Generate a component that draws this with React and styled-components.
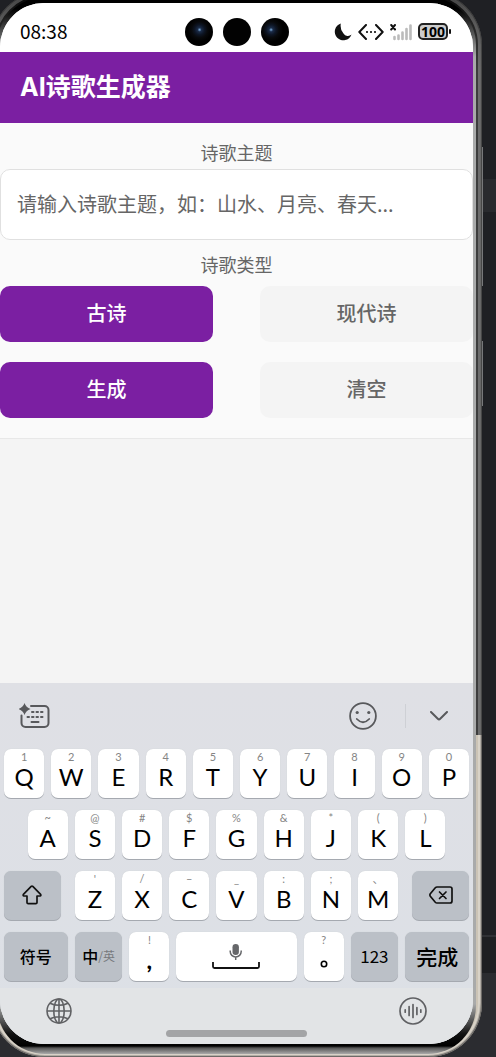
import React, { useState } from 'react';
import styled, { createGlobalStyle } from 'styled-components';

const ROW_ONE = [
    ['Q', '1'], ['W', '2'], ['E', '3'], ['R', '4'], ['T', '5'],
    ['Y', '6'], ['U', '7'], ['I', '8'], ['O', '9'], ['P', '0'],
];
const ROW_TWO = [
    ['A', '~'], ['S', '@'], ['D', '#'], ['F', '$'], ['G', '%'],
    ['H', '&'], ['J', '*'], ['K', '('], ['L', ')'],
];
const ROW_THREE = [
    ['Z', "'"], ['X', '/'], ['C', '–'], ['V', '_'], ['B', ':'], ['N', ';'], ['M', '、'],
];

function LetterKey({ letter, hint, start, onPress }) {
    return (
        <Key type="button" $start={start} onClick={() => onPress(letter)}>
            <Hint>{hint}</Hint>
            <Letter>{letter}</Letter>
        </Key>
    );
}

function StatusBar() {
    return (
        <Status>
            <Time>08:38</Time>
            <Cameras>
                <Lens $glint="52%" />
                <Lens />
                <Lens $glint="36%" />
            </Cameras>
            <StatusIcons>
                <svg width="18" height="18" viewBox="0 0 18 18">
                    <path d="M6.800 .5A8.600 8.600 0 1 0 17.500 11.600A5.200 5.200 0 0 1 9.500 10.500Q5.800 6.500 6.800 .5Z" fill="#111" />
                </svg>
                <svg width="26" height="16" viewBox="0 0 26 16" fill="none" stroke="#111" strokeWidth="2" strokeLinecap="round" strokeLinejoin="round">
                    <path d="M8 1L1.300 8L8 15M18 1L24.700 8L18 15" />
                    <path d="M9 8h.01M13 8h.01M17 8h.01" strokeWidth="2.200" />
                </svg>
                <svg width="22" height="18" viewBox="0 0 22 18" strokeLinecap="round">
                    <path d="M1.200 2L5 6.500M5 2L1.200 6.500" stroke="#111" strokeWidth="2" />
                    <path d="M4.500 14v2M8.500 12.500v3.500M12.500 9.500v6.500M16.500 6v10M20.500 2.500v13.500" stroke="#bbb" strokeWidth="2.600" />
                </svg>
                <Battery>100</Battery>
            </StatusIcons>
        </Status>
    );
}

function Keyboard({ onPress }) {
    return (
        <KeyboardArea>
            <Toolbar>
                <IconButton type="button" aria-label="AI">
                    <svg width="31" height="26" viewBox="0 0 31 26" fill="none" stroke="#58595c" strokeLinecap="round">
                        <path d="M12 3H25.500a4 4 0 0 1 4 4V20a4 4 0 0 1-4 4H6.500a4 4 0 0 1-4-4V12.500" strokeWidth="2" />
                        <path d="M5.500 0Q7 4.500 11.500 6Q7 7.500 5.500 12Q4 7.500 -.5 6Q4 4.500 5.500 0Z" fill="#58595c" stroke="none" />
                        <path d="M13 9h1.500M17.500 9h1.500M22 9h1.500M8.500 14h1.500M13 14h1.500M17.500 14h1.500M22 14h1.500M12.500 19h7" strokeWidth="2" />
                    </svg>
                </IconButton>
                <Tools>
                    <IconButton type="button" aria-label="表情">
                        <svg width="28" height="28" viewBox="0 0 28 28" fill="none" stroke="#58595c" strokeWidth="1.800" strokeLinecap="round">
                            <circle cx="14" cy="14" r="12.900" />
                            <path d="M7.800 17Q14 23.500 20.200 17" />
                            <circle cx="8.200" cy="10.500" r="1.600" fill="#58595c" stroke="none" />
                            <circle cx="19.800" cy="10.500" r="1.600" fill="#58595c" stroke="none" />
                        </svg>
                    </IconButton>
                    <Divider />
                    <IconButton type="button" aria-label="收起">
                        <svg width="18" height="10" viewBox="0 0 18 10" fill="none" stroke="#58595c" strokeWidth="2" strokeLinecap="round" strokeLinejoin="round">
                            <path d="M1 1L7.800 7.800Q9 9 10.200 7.800L17 1" />
                        </svg>
                    </IconButton>
                </Tools>
            </Toolbar>
            <Keys>
                <KeyRow>
                    {ROW_ONE.map(([letter, hint]) => (
                        <LetterKey key={letter} letter={letter} hint={hint} onPress={onPress} />
                    ))}
                </KeyRow>
                <KeyRow>
                    {ROW_TWO.map(([letter, hint], i) => (
                        <LetterKey key={letter} letter={letter} hint={hint} start={i === 0 ? 2 : null} onPress={onPress} />
                    ))}
                </KeyRow>
                <KeyRow>
                    <WideKey type="button" $side="right" aria-label="Shift">
                        <svg width="20" height="20" viewBox="0 0 20 20" fill="none" stroke="#111" strokeWidth="1.700" strokeLinejoin="round">
                            <path d="M9.200 1.400Q10 .7 10.800 1.400L18.600 9.400Q19.300 10.700 18 11H15V17.500Q15 18.700 13.800 18.700H6.200Q5 18.700 5 17.500V11H2Q.7 10.700 1.400 9.400Z" />
                        </svg>
                    </WideKey>
                    {ROW_THREE.map(([letter, hint]) => (
                        <LetterKey key={letter} letter={letter} hint={hint} onPress={onPress} />
                    ))}
                    <WideKey type="button" $side="left" aria-label="删除">
                        <svg width="24" height="18" viewBox="0 0 24 18" fill="none" stroke="#111" strokeWidth="1.700" strokeLinecap="round" strokeLinejoin="round">
                            <path d="M8 1H21a2 2 0 0 1 2 2V15a2 2 0 0 1-2 2H8Q7 17 6.300 16.200L1.300 10.200Q.5 9 1.300 7.800L6.300 1.800Q7 1 8 1Z" />
                            <path d="M10.500 6L17 12.500M17 6L10.500 12.500" />
                        </svg>
                    </WideKey>
                </KeyRow>
                <BottomRow>
                    <GreyKey type="button">符号</GreyKey>
                    <GreyKey type="button">中<Small>/英</Small></GreyKey>
                    <Key type="button" onClick={() => onPress('，')}>
                        <Hint>!</Hint>
                        <Letter $bold>,</Letter>
                    </Key>
                    <SpaceKey type="button" aria-label="空格" onClick={() => onPress(' ')}>
                        <svg width="48" height="26" viewBox="0 0 48 26" fill="none">
                            <rect x="20.500" y="0" width="6.400" height="11" rx="3.200" fill="#66676a" />
                            <path d="M18.200 6.500v1a5.500 5.500 0 0 0 11 0v-1M23.700 13v3" stroke="#66676a" strokeWidth="1.500" />
                            <path d="M1 18v4.500q0 1.500 1.500 1.500h43q1.500 0 1.500-1.500V18" stroke="#111" strokeWidth="1.800" />
                        </svg>
                    </SpaceKey>
                    <Key type="button" onClick={() => onPress('。')}>
                        <Hint>?</Hint>
                        <Stop viewBox="0 0 8 8"><circle cx="4" cy="4" r="2.700" /></Stop>
                    </Key>
                    <GreyKey type="button"><Digits>123</Digits></GreyKey>
                    <GreyKey type="button" $large>完成</GreyKey>
                </BottomRow>
            </Keys>
            <NavArea>
                <NavIcons>
                    <IconButton type="button" aria-label="切换输入法">
                        <svg width="26" height="26" viewBox="0 0 26 26" fill="none" stroke="#606164" strokeWidth="1.600">
                            <circle cx="13" cy="13" r="12" />
                            <ellipse cx="13" cy="13" rx="5.200" ry="12" />
                            <path d="M1 13H25M13 1V25M4 5.200Q13 9.400 22 5.200M4 20.800Q13 16.600 22 20.800" />
                        </svg>
                    </IconButton>
                    <IconButton type="button" aria-label="语音">
                        <svg width="28" height="28" viewBox="0 0 28 28" fill="none" stroke="#606164" strokeWidth="1.700" strokeLinecap="round">
                            <circle cx="14" cy="14" r="13" />
                            <path d="M6.200 12.800v2.400M10.100 9.500v9M14 7.500v13M17.900 10.500v7M21.800 12.800v2.400" />
                        </svg>
                    </IconButton>
                </NavIcons>
                <HomeBar />
            </NavArea>
        </KeyboardArea>
    );
}

function App() {
    const [topic, setTopic] = useState('');
    const [type, setType] = useState('古诗');

    return (
        <>
            <GlobalStyle />
            <Desk>
                <Phone>
                    <SideButton $top="156px" $height="139px" />
                    <SideButton $top="350px" $height="65px" />
                    <Bezel>
                        <Screen>
                            <StatusBar />
                            <Header>
                                <Title>AI诗歌生成器</Title>
                            </Header>
                            <Form onSubmit={(e) => e.preventDefault()}>
                                <Label as="label" htmlFor="topic">诗歌主题</Label>
                                <TopicInput
                                    id="topic"
                                    type="text"
                                    value={topic}
                                    onChange={(e) => setTopic(e.target.value)}
                                    placeholder="请输入诗歌主题，如：山水、月亮、春天..."
                                />
                                <Label $spaced id="kind">诗歌类型</Label>
                                <ButtonRow role="group" aria-labelledby="kind">
                                    <Button type="button" $primary={type === '古诗'} onClick={() => setType('古诗')}>古诗</Button>
                                    <Button type="button" $primary={type === '现代诗'} onClick={() => setType('现代诗')}>现代诗</Button>
                                </ButtonRow>
                                <ButtonRow>
                                    <Button type="submit" $primary>生成</Button>
                                    <Button type="button" onClick={() => setTopic('')}>清空</Button>
                                </ButtonRow>
                            </Form>
                            <Result />
                            <Keyboard onPress={(char) => setTopic(topic + char)} />
                        </Screen>
                    </Bezel>
                </Phone>
            </Desk>
        </>
    );
}

const GlobalStyle = createGlobalStyle`
    * {
        box-sizing: border-box;
    }
    body {
        margin: 0;
        font-family: "Noto Sans CJK SC", "Noto Sans", sans-serif;
    }
    button, input {
        font-family: inherit;
    }
`
const Desk = styled.div`
    display: flex;
    min-height: 100vh;
    overflow: hidden;
    background: linear-gradient(
        #1f2024 0 179px, #292a2e 179px 212px, #1f2024 212px 935px,
        #303135 935px 937px, #1e1f22 937px 973px, #2b2c30 973px
    );
`
const Phone = styled.div`
    position: relative;
    flex: 1;
    display: flex;
    margin: -9px 14px 0 -9px;
    padding: 6px 6px 3px;
    border-radius: 54px;
    background: linear-gradient(#000 0, #222 30px, #3d3d3d 80px, #3d3d3d 744px, #cbc3b5 744px);
    box-shadow: inset 0 0 0 1px rgba(40, 40, 40, 0.5), inset 0 0 0 2px rgba(90, 90, 90, 0.3), inset 0 0 0 4px rgba(255, 255, 255, 0.25);
`
const SideButton = styled.div`
    position: absolute;
    right: -1px;
    top: ${props => props.$top};
    height: ${props => props.$height};
    width: 1px;
    background: #77787a;
`
const Bezel = styled.div`
    flex: 1;
    display: flex;
    padding: 6px 3px 10px;
    border-radius: 48px;
    background: linear-gradient(#000 0, #000 12px, #a9aaaa 60px, #a9aaaa calc(100% - 50px), #111 calc(100% - 20px), #000 calc(100% - 8px), #555 calc(100% - 6px), #aaa 100%);
`
const Screen = styled.div`
    flex: 1;
    min-width: 0;
    display: flex;
    flex-direction: column;
    overflow: hidden;
    border-radius: 44px;
    background: #f4f4f4;
`
const Status = styled.div`
    display: grid;
    grid-template-columns: 1fr auto 1fr;
    align-items: center;
    height: 49px;
    padding: 8px 20px 0;
    background: #fff;
`
const Time = styled.span`
    font-size: 19px;
    line-height: 24px;
    padding-bottom: 2px;
    color: #000;
`
const Cameras = styled.div`
    display: flex;
    gap: 10px;
`
const Lens = styled.span`
    width: 28px;
    height: 28px;
    border-radius: 50%;
    background: ${props => props.$glint
        ? `radial-gradient(circle at ${props.$glint} 42%, #7fb0df 0, #1b2c48 2px, #0d1524 5px, #08090b 8px, #000 12px)`
        : '#020202'};
`
const StatusIcons = styled.div`
    display: flex;
    align-items: center;
    justify-content: flex-end;
    gap: 6px;
`
const Battery = styled.span`
    position: relative;
    width: 30px;
    height: 17px;
    margin-right: 5px;
    border: 2px solid #222;
    border-radius: 5px;
    background: #ccc;
    color: #000;
    font-family: "Noto Sans", sans-serif;
    font-size: 14px;
    line-height: 13px;
    font-weight: 700;
    display: flex;
    justify-content: center;

    &::after {
        content: '';
        position: absolute;
        right: -5px;
        top: 4px;
        width: 2px;
        height: 5px;
        border-radius: 1px;
        background: #111;
    }
`
const Header = styled.header`
    display: flex;
    align-items: center;
    height: 71px;
    padding: 0 20px 2px;
    background: #7b1fa2;
`
const Title = styled.h1`
    margin: 0;
    font-family: Inter, "Noto Sans CJK SC", sans-serif;
    font-size: 25px;
    line-height: 36px;
    font-weight: 700;
    color: #fff;
`
const Form = styled.form`
    display: flex;
    flex-direction: column;
    padding: 19px 0 20px;
    background: #fafafa;
    border-bottom: 1px solid #e8e8e8;
`
const Label = styled.span`
    align-self: center;
    margin: ${props => props.$spaced ? '14px 0 12px' : '0 0 7px'};
    font-size: 18px;
    line-height: 20px;
    color: #666;
`
const TopicInput = styled.input`
    width: 100%;
    height: 71px;
    padding: 0 16px 2px;
    border: 1px solid #e0e0e0;
    border-radius: 10px;
    background: #fff;
    font-size: 20px;
    color: #333;
    outline: none;

    &::placeholder {
        color: #666;
        opacity: 1;
    }
`
const ButtonRow = styled.div`
    display: flex;
    justify-content: space-between;

    & + & {
        margin-top: 20px;
    }
`
const Button = styled.button`
    width: 45%;
    height: 56px;
    padding: 0 0 3px;
    border: none;
    border-radius: 10px;
    background: ${props => props.$primary ? '#7b1fa2' : '#f4f4f4'};
    color: ${props => props.$primary ? '#fff' : '#666'};
    font-size: 20px;
    font-weight: 500;
`
const Result = styled.main`
    flex: 1;
`
const KeyboardArea = styled.section`
    display: flex;
    flex-direction: column;
    background: linear-gradient(#dfe0e5, #dce0e6);
`
const Toolbar = styled.div`
    display: flex;
    align-items: center;
    justify-content: space-between;
    height: 66px;
    padding: 0 25px 0 19px;
`
const Tools = styled.div`
    display: flex;
    align-items: center;
    gap: 24px;
`
const IconButton = styled.button`
    display: flex;
    padding: 0;
    border: none;
    background: none;
`
const Divider = styled.span`
    width: 1px;
    height: 24px;
    margin-left: 4px;
    background: #ced0d5;
`
const Keys = styled.div`
    display: flex;
    flex-direction: column;
    gap: 12px;
    padding: 0 4px 7px;
`
const KeyRow = styled.div`
    display: grid;
    grid-template-columns: repeat(20, minmax(0, 1fr));
    gap: 7px;
`
const BottomRow = styled.div`
    display: grid;
    grid-template-columns: 64fr 48fr 40fr 121fr 40fr 48fr 64fr;
    gap: 7px;

    & > button {
        grid-column: auto;
    }
`
const Key = styled.button`
    grid-column: ${props => props.$start ? `${props.$start} / span 2` : 'span 2'};
    display: flex;
    flex-direction: column;
    align-items: center;
    min-width: 0;
    height: 49px;
    padding: 0;
    border: none;
    border-radius: 7px;
    background: #fff;
    box-shadow: 0 1px 0 #a5a9b0, 0 0 1px #c4c7cc;
    color: #000;
`
const Hint = styled.span`
    height: 14px;
    font-family: Lato, "Noto Sans CJK SC", sans-serif;
    font-size: 11px;
    line-height: 15px;
    color: #858585;
`
const Letter = styled.span`
    font-family: Lato, sans-serif;
    font-size: 24px;
    line-height: 28px;
    font-weight: ${props => props.$bold ? 700 : 400};
`
const Stop = styled.svg`
    width: 8px;
    height: 8px;
    margin-top: 14px;
    fill: none;
    stroke: #000;
    stroke-width: 1.6;
`
const GreyKey = styled(Key)`
    flex-direction: row;
    justify-content: center;
    padding-bottom: 2px;
    background: #bbc0c7;
    font-size: ${props => props.$large ? '21px' : '16px'};
    font-weight: 500;
    white-space: nowrap;
`
const WideKey = styled(GreyKey)`
    grid-column: span 3;
    margin-${props => props.$side}: 7px;
`
const SpaceKey = styled(Key)`
    justify-content: center;
`
const Digits = styled.span`
    font-size: 17px;
    font-weight: 400;
`
const Small = styled.span`
    font-size: 12px;
    font-weight: 400;
    color: #77797d;
`
const NavArea = styled.div`
    display: flex;
    flex-direction: column;
    align-items: center;
    gap: 5px;
    padding: 9px 0 7px;
    background: #e2e4e6;
`
const NavIcons = styled.div`
    align-self: stretch;
    display: flex;
    align-items: center;
    justify-content: space-between;
    height: 28px;
    padding: 0 46px;
`
const HomeBar = styled.div`
    width: 30%;
    height: 7px;
    border-radius: 4px;
    background: #a3a4a6;
`
export default App;
